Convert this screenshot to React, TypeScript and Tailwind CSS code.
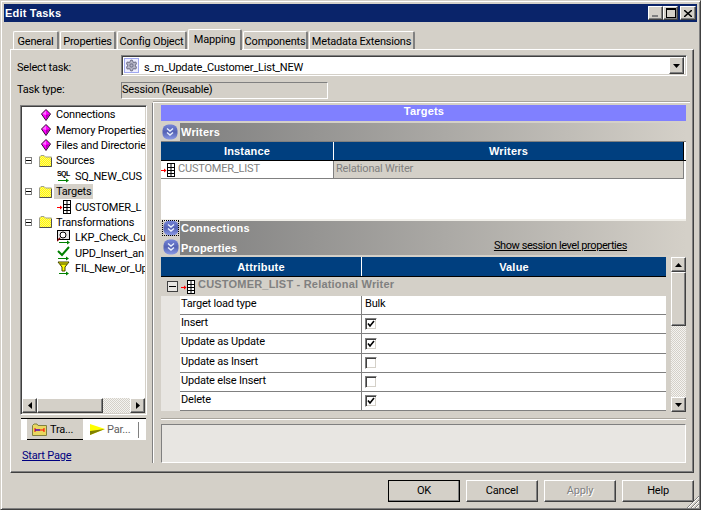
import { Settings } from "lucide-react";

const FONT = "font-['Roboto','Liberation_Sans',Arial,sans-serif] text-[11px] leading-none tracking-[-0.2px]";
const BOLD = "font-['Liberation_Sans',Arial,sans-serif] font-bold tracking-[0.2px]";
const RAISED =
  "border border-t-white border-l-white border-r-[#404040] border-b-[#404040] shadow-[inset_-1px_-1px_0_#808080] bg-[#d4d0c8]";
const SUNKEN =
  "border border-t-[#808080] border-l-[#808080] border-r-white border-b-white shadow-[inset_1px_1px_0_#404040,inset_-1px_-1px_0_#d4d0c8]";
const HATCH = "bg-[repeating-conic-gradient(#d4d0c8_0%_25%,#f4f3f0_0%_50%)] bg-[length:2px_2px]";

type TreeKind = "diamond" | "folder" | "sql" | "target" | "lkp" | "upd" | "fil";

const TREE: { label: string; kind: TreeKind; selected?: boolean }[] = [
  { label: "Connections", kind: "diamond" },
  { label: "Memory Properties", kind: "diamond" },
  { label: "Files and Directories", kind: "diamond" },
  { label: "Sources", kind: "folder" },
  { label: "SQ_NEW_CUS", kind: "sql" },
  { label: "Targets", kind: "folder", selected: true },
  { label: "CUSTOMER_L", kind: "target" },
  { label: "Transformations", kind: "folder" },
  { label: "LKP_Check_Cu", kind: "lkp" },
  { label: "UPD_Insert_an", kind: "upd" },
  { label: "FIL_New_or_Up", kind: "fil" },
];

const ATTRS: { name: string; value?: string; checked?: boolean; h: string; pb: string }[] = [
  { name: "Target load type", value: "Bulk", h: "h-[19px]", pb: "pb-[4px]" },
  { name: "Insert", checked: true, h: "h-[19px]", pb: "pb-[4px]" },
  { name: "Update as Update", checked: true, h: "h-[20px]", pb: "pb-[5px]" },
  { name: "Update as Insert", checked: false, h: "h-[19px]", pb: "pb-[4px]" },
  { name: "Update else Insert", checked: false, h: "h-[19px]", pb: "pb-[3px]" },
  { name: "Delete", checked: true, h: "h-[19px]", pb: "pb-[3px]" },
];

function Diamond() {
  return (
    <svg width="10" height="12" viewBox="0 0 10 12">
      <path d="M5 .5 9.5 5 5 11.5.5 5Z" fill="#ff00ff" stroke="#301030" />
      <path d="M5 1.5V6L1.5 5Z" fill="#ff70ff" />
      <path d="M5 6 8.5 5 5 10.5Z" fill="#b000b0" />
    </svg>
  );
}

function Folder() {
  return (
    <svg width="13" height="12" viewBox="0 0 13 12">
      <defs>
        <pattern id="dither" width="2" height="2" patternUnits="userSpaceOnUse">
          <rect width="2" height="2" fill="#ffff00" />
          <rect width="1" height="1" fill="#fff080" />
          <rect x="1" y="1" width="1" height="1" fill="#fff080" />
        </pattern>
      </defs>
      <path d="M.5 11.5V2L2 .5h3L6.5 2h6v9.5Z" fill="url(#dither)" stroke="#a0a090" />
      <path d="M.5 11.5h12V3" fill="none" stroke="#505050" />
    </svg>
  );
}

function Minus() {
  return (
    <svg width="7" height="7" viewBox="0 0 7 7">
      <rect x=".5" y=".5" width="6" height="6" fill="#fff" stroke="#808080" />
      <path d="M1 3.5h5" stroke="#000" />
    </svg>
  );
}

function TargetIcon() {
  return (
    <svg width="14" height="14" viewBox="0 0 14 14" className="shrink-0">
      <path d="M0 7.5h5" stroke="#ff0000" />
      <path d="M3 5.5 5.5 7.5 3 9.5Z" fill="#ff0000" />
      <rect x="6.5" y=".5" width="7" height="13" fill="#fff" stroke="#000" />
      <path d="M6.5 4.5h7M6.5 7.5h7M6.5 10.5h7M10 .5v13" stroke="#000" />
    </svg>
  );
}

function TreeIcon({ kind }: { kind: TreeKind }) {
  if (kind === "sql")
    return (
      <svg width="14" height="15" viewBox="0 0 14 15">
        <text x="0" y="7" fontSize="7" fontWeight="700" fontFamily="Liberation Sans" fill="#000" textLength="13">
          SQL
        </text>
        <path d="M1 11.5h10" stroke="#008000" />
        <path d="M9 9.5l3 2-3 2Z" fill="#008000" />
      </svg>
    );
  if (kind === "target") return <TargetIcon />;
  if (kind === "lkp")
    return (
      <svg width="14" height="15" viewBox="0 0 14 15">
        <rect x=".5" y=".5" width="12" height="9" fill="#e8e8e8" stroke="#000" />
        <circle cx="6" cy="5" r="3" fill="#fff" stroke="#000" />
        <path d="M3 8 0 11" stroke="#800000" strokeWidth="1.5" />
        <path d="M2 12.5h10" stroke="#008000" />
        <path d="M10 10.5l3 2-3 2Z" fill="#008000" />
      </svg>
    );
  if (kind === "upd")
    return (
      <svg width="14" height="15" viewBox="0 0 14 15">
        <path d="M1 5l4 4 7-8" fill="none" stroke="#008000" strokeWidth="2" />
        <path d="M1 12.5h10" stroke="#008000" />
        <path d="M9 10.5l3 2-3 2Z" fill="#008000" />
      </svg>
    );
  return (
    <svg width="14" height="15" viewBox="0 0 14 15">
      <path d="M1 1h11L8 6v4H5V6Z" fill="#ffff00" stroke="#404000" />
      <path d="M3 3h7" stroke="#404000" />
      <path d="M2 12.5h9" stroke="#008000" />
      <path d="M9 10.5l3 2-3 2Z" fill="#008000" />
    </svg>
  );
}

function TreeRow({ label, kind, selected }: { label: string; kind: TreeKind; selected?: boolean }) {
  const isChild = kind !== "diamond" && kind !== "folder";
  return (
    <div className="flex h-[15.4px] items-center">
      <div className="flex w-[15px] shrink-0 justify-center pr-[2px]">{kind === "folder" && <Minus />}</div>
      <div className="flex w-[17px] shrink-0 justify-center">
        {kind === "diamond" && <Diamond />}
        {kind === "folder" && <Folder />}
      </div>
      {isChild && (
        <div className="ml-[3px] mr-[2px] w-[14px] shrink-0">
          <TreeIcon kind={kind} />
        </div>
      )}
      <span className={`whitespace-nowrap px-[2px] py-[2px] ${selected ? "bg-[#d4d0c8]" : ""}`}>{label}</span>
    </div>
  );
}

function Collapse({ focus }: { focus?: boolean }) {
  return (
    <div
      className={`flex h-[16px] w-[17px] shrink-0 items-center justify-center ${
        focus ? "outline-1 outline-dotted outline-black -outline-offset-1" : ""
      }`}
    >
      <svg width="16" height="16" viewBox="0 0 16 16">
        <defs>
          <linearGradient id="orb" x1="0" y1="0" x2="0" y2="1">
            <stop offset="0" stopColor="#7484d8" />
            <stop offset=".5" stopColor="#5462b4" />
            <stop offset="1" stopColor="#8a9ae6" />
          </linearGradient>
        </defs>
        <rect x=".5" y=".5" width="15" height="15" rx="6" fill="url(#orb)" />
        <path d="M5 4.5 8 7 11 4.5M5 8.5 8 11 11 8.5" fill="none" stroke="#e8f0ff" strokeWidth="1.4" />
      </svg>
    </div>
  );
}

function Arrow({ dir }: { dir: "up" | "down" | "left" | "right" }) {
  const d = {
    up: "M0 4h7L3.5 0Z",
    down: "M0 0h7L3.5 4Z",
    left: "M4 0v7L0 3.5Z",
    right: "M0 0v7L4 3.5Z",
  }[dir];
  const [w, h] = dir === "up" || dir === "down" ? [7, 4] : [4, 7];
  return (
    <svg width={w} height={h} viewBox={`0 0 ${w} ${h}`}>
      <path d={d} fill="#000" />
    </svg>
  );
}

function Check({ checked }: { checked?: boolean }) {
  return (
    <div className={`flex h-[12px] w-[12px] items-center justify-center bg-white ${SUNKEN} box-border`}>
      {checked && (
        <svg width="8" height="8" viewBox="0 0 8 8">
          <path d="M1 3.5 3 6 7 1" fill="none" stroke="#000" strokeWidth="1.6" />
        </svg>
      )}
    </div>
  );
}

const TABS = [
  { label: "General", w: "w-[46px]" },
  { label: "Properties", w: "w-[56px]" },
  { label: "Config Object", w: "w-[70px]" },
  { label: "Mapping", w: "w-[54px]", active: true },
  { label: "Components", w: "w-[65px]" },
  { label: "Metadata Extensions", w: "w-[106px]" },
];

export default function App() {
  return (
    <div
      className={`${FONT} relative box-border h-[510px] w-[701px] overflow-hidden border border-[#d4d0c8] border-r-[#404040] border-b-[#404040] bg-[#d4d0c8] p-[3px] text-black shadow-[inset_1px_1px_0_#fff,inset_-1px_-1px_0_#808080]`}
    >
      {/* title bar */}
      <div className="flex h-[18px] w-[693px] items-center justify-between bg-[#0a246a] pl-[1px] pr-[1px]">
        <span className={`${BOLD} text-[11px] text-white`}>Edit Tasks</span>
        <div className="flex">
          <div className={`${RAISED} flex h-[14px] w-[15px] items-end pb-[2px] pl-[3px]`}>
            <div className="h-[2px] w-[6px] bg-[#808080]" />
          </div>
          <div className={`${RAISED} flex h-[14px] w-[15px] items-center justify-center`}>
            <div className="h-[10px] w-[10px] border border-t-2 border-black" />
          </div>
          <div className={`${RAISED} ml-[2px] flex h-[14px] w-[16px] items-center justify-center`}>
            <svg width="8" height="7" viewBox="0 0 8 7">
              <path d="M0 0 8 7M8 0 0 7" stroke="#000" strokeWidth="1.5" />
            </svg>
          </div>
        </div>
      </div>

      {/* tabs */}
      <div className="ml-[9px] flex h-[27px] items-end gap-[1px]">
        {TABS.map((t) => (
          <div
            key={t.label}
            className={`${t.w} relative flex items-center justify-center rounded-t-[2px] border-l border-t border-r-2 border-l-white border-t-white border-r-[#808080] bg-[#d4d0c8] ${
              t.active ? "z-10 -mb-[1px] h-[21px] pb-[2px]" : "h-[18px] pt-[1px]"
            }`}
          >
            {t.label}
          </div>
        ))}
      </div>

      {/* tab page */}
      <div className="ml-[6px] box-border h-[424px] w-[684px] border border-t-white border-l-white border-r-[#404040] border-b-[#404040] shadow-[inset_-1px_-1px_0_#808080]">
        <div className="ml-[6px] mt-[5px] flex h-[21px] items-center">
          <span className="w-[104px] pt-[3px]">Select task:</span>
          <div className={`${SUNKEN} box-border flex h-[21px] w-[566px] items-center bg-white pl-[2px] pr-[2px]`}>
            <div className="mr-[5px] flex h-[15px] w-[15px] items-center justify-center border border-[#a0a8f0] bg-[#eeeeff]">
              <Settings size={13} strokeWidth={2} className="fill-[#b8b8c8] text-[#787890]" />
            </div>
            <span className="pt-[3px]">s_m_Update_Customer_List_NEW</span>
            <div className={`${RAISED} ml-auto flex h-[17px] w-[15px] items-center justify-center`}>
              <Arrow dir="down" />
            </div>
          </div>
        </div>
        <div className="ml-[6px] mt-[6px] flex h-[17px] items-center">
          <span className="w-[104px] pb-[2px]">Task type:</span>
          <div className="box-border flex h-[17px] w-[207px] items-center border border-t-[#808080] border-l-[#808080] border-r-white border-b-white pb-[2px]">
            Session (Reusable)
          </div>
        </div>

        <div className="ml-[142px] mt-[2px] h-[2px] w-[537px] border-t border-b border-t-[#a8a49c] border-b-white" />

        <div className="flex">
          {/* left column */}
          <div className="ml-[9px] w-[127px] shrink-0 pt-[2px]">
            <div className={`${SUNKEN} box-border flex h-[310px] flex-col bg-white p-[1px]`}>
              <div className="flex-1 overflow-hidden">
                {TREE.map((n) => (
                  <TreeRow key={n.label} {...n} />
                ))}
              </div>
              <div className="flex h-[15px] shrink-0 bg-[#d4d0c8]">
                <div className={`${RAISED} flex w-[15px] items-center justify-center`}>
                  <Arrow dir="left" />
                </div>
                <div className={`${RAISED} w-[66px]`} />
                <div className={`${HATCH} flex-1`} />
                <div className={`${RAISED} flex w-[15px] items-center justify-center`}>
                  <Arrow dir="right" />
                </div>
              </div>
            </div>
            <div className="ml-[1px] mt-[3px] flex h-[22px] w-[125px] border-t border-black bg-white">
              <div className="ml-[6px] flex h-[21px] w-[56px] items-center gap-[3px] border-b border-black bg-[#d4d0c8] pl-[5px]">
                <svg width="15" height="13" viewBox="0 0 15 13" className="shrink-0">
                  <path d="M.5 2.5 2 1h3l1 1.5h8.5v10H.5Z" fill="#e8d860" stroke="#808040" />
                  <path d="M3 7h9M3 5v4M12 5v4" stroke="#ff0000" />
                  <path d="M3 7h5" stroke="#0000ff" />
                </svg>
                <span>Tra...</span>
              </div>
              <div className="flex flex-1 items-center gap-[2px] pl-[7px]">
                <svg width="15" height="11" viewBox="0 0 15 11" className="shrink-0">
                  <path d="M0 0 15 5 0 11Z" fill="#ffff00" />
                  <path d="M0 7 15 5 0 11Z" fill="#808000" />
                </svg>
                <span className="text-[#606060]">Par...</span>
                <div className="ml-[6px] h-[16px] w-[1px] bg-[#808080]" />
              </div>
            </div>
            <div className="ml-[2px] mt-[10px] text-[#000080] underline">Start Page</div>
          </div>

          {/* separator */}
          <div className="ml-[5px] h-[360px] w-[2px] shrink-0 border-l border-r border-l-[#808080] border-r-white" />

          {/* right column */}
          <div className="ml-[7px] w-[525px] shrink-0 pt-[2px]">
            <div className={`${BOLD} flex h-[16px] items-center justify-center bg-[#8080ff] pb-[3px] pl-[1px] text-white`}>
              Targets
            </div>
            <div className="mt-[2px] flex h-[18px]">
              <div className="w-[19px] shrink-0 pt-[1px]">
                <Collapse />
              </div>
              <div className={`${BOLD} flex flex-1 items-center bg-gradient-to-r from-[#808080] to-[#d4d0c8] pl-[1px] pt-[1px] text-white`}>
                Writers
              </div>
            </div>
            <div className="h-[1px] bg-[#808080]" />

            <div className="h-[77px] bg-white">
              <div className={`${BOLD} flex h-[19px] border-b border-black text-white`}>
                <div className="flex w-[173px] items-center justify-center border-r border-white bg-[#003f7f]">
                  Instance
                </div>
                <div className="flex w-[349px] items-center justify-center bg-[#003f7f]">Writers</div>
                <div className="w-[1px] bg-black" />
              </div>
              <div className="flex h-[18px] w-[523px] border-b border-[#808080] text-[#808080]">
                <div className="flex w-[173px] items-center border-r border-[#808080]">
                  <TargetIcon />
                  <span className="ml-[3px] pb-[2px]">CUSTOMER_LIST</span>
                </div>
                <div className="flex flex-1 items-center border-r border-[#808080] bg-[#d4d0c8] pb-[2px] pl-[2px]">
                  Relational Writer
                </div>
              </div>
            </div>

            <div className="h-[2px] bg-[#f0eee8]" />
            <div className="flex h-[34px]">
              <div className="w-[19px] shrink-0 pl-[1px]">
                <div className="-mt-[1px] h-[19px]">
                  <Collapse focus />
                </div>
                <Collapse />
              </div>
              <div className={`${BOLD} flex flex-1 flex-col bg-gradient-to-r from-[#808080] to-[#d4d0c8] pl-[1px] text-white`}>
                <div className="mt-[2px] h-[18px]">Connections</div>
                <div className="flex h-[14px] items-center">
                  <span>Properties</span>
                  <span className="ml-auto mr-[59px] -mt-[5px] font-['Roboto','Liberation_Sans',Arial,sans-serif] font-normal tracking-[-0.42px] text-black underline">
                    Show session level properties
                  </span>
                </div>
              </div>
            </div>

            <div className="mt-[2px] flex h-[155px]">
              <div className="w-[505px] shrink-0 overflow-hidden">
                <div className={`${BOLD} flex h-[20px] border-b border-black pt-[1px] text-white`}>
                  <div className="-mt-[1px] flex w-[201px] items-center justify-center border-r border-white bg-[#003f7f] pt-[1px]">
                    Attribute
                  </div>
                  <div className="-mt-[1px] flex flex-1 items-center justify-center bg-[#003f7f] pt-[1px]">Value</div>
                </div>
                <div className={`${BOLD} flex h-[19px] items-center bg-[#d4d0c8] text-[#808080]`}>
                  <div className="ml-[6px] mr-[3px] flex h-[11px] w-[11px] items-center justify-center border border-[#404040] bg-[#e8e6e2]">
                    <div className="h-[1px] w-[7px] bg-black" />
                  </div>
                  <TargetIcon />
                  <span className="ml-[3px] pb-[4px]">CUSTOMER_LIST - Relational Writer</span>
                </div>
                <div className="bg-[#e8e6e2] pl-[19px]">
                  {ATTRS.map((a) => (
                    <div key={a.name} className={`${a.h} flex border-b border-[#808080] bg-white`}>
                      <div className={`${a.pb} flex w-[182px] shrink-0 items-center border-r border-[#808080] pl-[1px]`}>
                        {a.name}
                      </div>
                      <div className={`flex flex-1 items-center pl-[3px] ${a.value ? a.pb : ""}`}>
                        {a.value ?? <Check checked={a.checked} />}
                      </div>
                    </div>
                  ))}
                </div>
              </div>
              <div className="ml-[5px] flex w-[15px] flex-col">
                <div className={`${RAISED} flex h-[15px] shrink-0 items-center justify-center`}>
                  <Arrow dir="up" />
                </div>
                <div className={`${RAISED} h-[54px] shrink-0`} />
                <div className={`${HATCH} flex-1`} />
                <div className={`${RAISED} flex h-[15px] shrink-0 items-center justify-center`}>
                  <Arrow dir="down" />
                </div>
              </div>
            </div>

            <div className="mt-[6px] h-[2px] border-t border-b border-t-[#a8a49c] border-b-white" />
            <div className="mt-[4px] h-[39px] border border-t-[#808080] border-l-[#808080] border-r-white border-b-white bg-[#e8e6e2]" />
          </div>
        </div>
      </div>

      {/* dialog buttons */}
      <div className="ml-[384px] mt-[7px] flex gap-[6px]">
        {["OK", "Cancel", "Apply", "Help"].map((b) => (
          <div
            key={b}
            className={`${RAISED} box-border flex h-[22px] w-[72px] items-center justify-center pb-[1px] ${
              b === "OK" ? "outline outline-1 -outline-offset-1 outline-black" : ""
            } ${b === "Apply" ? "text-[#808080] [text-shadow:1px_1px_0_#fff]" : ""}`}
          >
            {b}
          </div>
        ))}
      </div>

      {/* size grip */}
      <svg width="13" height="13" viewBox="0 0 13 13" className="absolute bottom-[1px] right-[1px]">
        <path d="M13 1 1 13M13 5 5 13M13 9 9 13" stroke="#808080" />
        <path d="M13 2 2 13M13 6 6 13M13 10 10 13" stroke="#fff" />
      </svg>
    </div>
  );
}
